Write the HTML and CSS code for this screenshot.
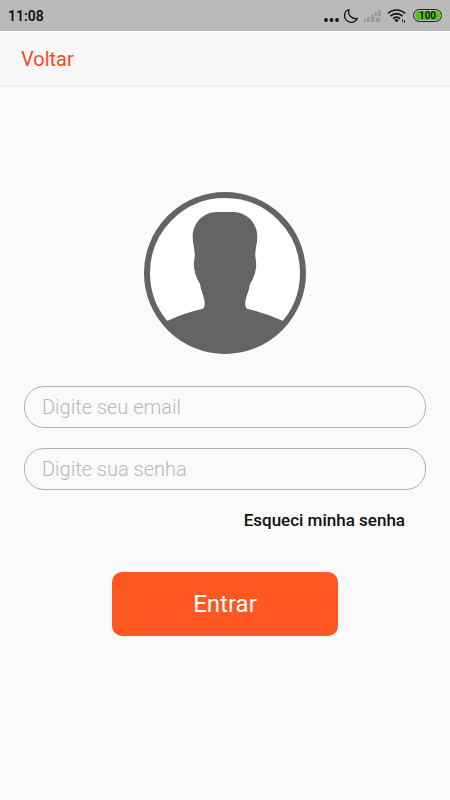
FILE: index.html
```html
<!DOCTYPE html>
<html lang="pt-BR">
    <head>
        <meta charset="utf-8">
        <meta name="viewport" content="width=device-width, initial-scale=1">
        <title>Entrar</title>
        <link rel="stylesheet" href="styles.css">
    </head>
    <body>
        <div class="status">
            <span class="hora">11:08</span>
            <div class="icones">
                <svg width="16" height="16" viewBox="0 0 16 16">
                    <circle cx="3" cy="12" r="1.9"/>
                    <circle cx="8.500" cy="12" r="1.9"/>
                    <circle cx="14" cy="12" r="1.9"/>
                </svg>
                <svg width="16" height="16" viewBox="0 0 16 16">
                    <path d="M6 1.500C3.200 2.400 1.500 4.900 1.500 7.600C1.500 11.400 4.500 14.300 8.200 14.300C11 14.300 13.300 12.700 14.300 10.300C9.200 11.600 4.200 7.300 6 1.500Z" fill="none" stroke="#111" stroke-width="1.300" stroke-linejoin="round"/>
                </svg>
                <svg class="sinal" width="18" height="16" viewBox="0 0 18 16">
                    <path d="M1 11h2v3H1zM4 9h3v5H4zM8 7h3v7H8zM12 4h2v4h-2zM15 2h3v6h-3z"/>
                    <path d="M12.500 9.500l4.500 4.500M17 9.500l-4.500 4.500" fill="none" stroke="#919191" stroke-width="1.500"/>
                </svg>
                <svg class="wifi" width="20" height="16" viewBox="0 0 20 16">
                    <g fill="none" stroke="#111" stroke-width="1.700">
                        <path d="M1 5.500C6 .8 13 .8 18 5.500"/>
                        <path d="M3.500 8.200C7 4.800 12 4.800 15.500 8.200"/>
                        <path d="M6 10.700C8.200 8.600 10.800 8.600 13 10.700"/>
                    </g>
                    <path d="M7.300 12C8.700 10.800 10.300 10.800 11.700 12L9.500 14.300Z"/>
                    <path d="M15.500 11v3M17.500 12v3" stroke="#333" stroke-width="1"/>
                </svg>
                <span class="bateria">100</span>
            </div>
        </div>
        <header class="header">
            <a href="#" class="voltar">Voltar</a>
        </header>
        <main class="wrapper">
            <svg class="avatar" width="162" height="162" viewBox="0 0 162 162" role="img" aria-label="Usuário">
                <circle cx="81" cy="81" r="78" fill="#fff" stroke="#646464" stroke-width="6"/>
                <path d="M81 20H73C59 20 48.700 31 48.700 45C48.700 53 51.500 58 50.500 66C48.500 75 51 84 56 92C57 100 61 105 60.700 113Q60.700 116 58 117Q40 121 23 129L20 131A79 79 0 0 0 142 131L139 129Q122 121 104 117Q101.300 116 101.300 113C101 105 105 100 106 92C111 84 113.500 75 111.500 66C110.500 58 113.300 53 113.300 45C113.300 31 103 20 89 20Z" fill="#646464"/>
            </svg>
            <form class="login">
                <input type="email" class="campo" placeholder="Digite seu email" aria-label="Email">
                <input type="password" class="campo" placeholder="Digite sua senha" aria-label="Senha">
                <a href="#" class="esqueci">Esqueci minha senha</a>
                <button type="button" class="entrar">Entrar</button>
            </form>
        </main>
    </body>
</html>
```
FILE: styles.css
```css
* {
    box-sizing: border-box;
}
body {
    margin: 0;
    background-color: #fafafa;
    font-family: Roboto, sans-serif;
}
.status {
    display: flex;
    justify-content: space-between;
    align-items: center;
    height: 31px;
    padding: 0 8px;
    background-color: #b9b9b9;
    color: #111;
}
.hora {
    font-size: 14px;
    font-weight: 600;
}
.icones {
    display: flex;
    align-items: center;
    gap: 4px;
}
.icones svg {
    fill: #111;
}
.icones .sinal {
    fill: #9b9b9b;
}
.wifi {
    margin: 0 2px;
}
.bateria {
    width: 29px;
    height: 13px;
    border: 1px solid #222;
    border-radius: 7px;
    box-shadow: inset 0 0 0 1px #b9b9b9;
    background-color: #4cc70c;
    font-size: 10px;
    font-weight: 600;
    line-height: 11px;
    text-align: center;
}
.header {
    display: flex;
    align-items: center;
    height: 56px;
    padding: 2px 21px 0;
    background-color: #f8f8f8;
    border-bottom: 2px solid #ececec;
}
.voltar {
    color: #ff4715;
    font-size: 20px;
    text-decoration: none;
}
.wrapper {
    padding: 105px 24px 24px;
}
.avatar {
    display: block;
    margin: 0 auto 32px;
}
.login {
    display: flex;
    flex-direction: column;
}
.campo {
    width: 100%;
    height: 42px;
    margin-bottom: 20px;
    padding: 0 17px;
    border: 1px solid #b0b0b0;
    border-radius: 20px;
    background-color: transparent;
    font-family: inherit;
    font-size: 20px;
    font-weight: 300;
}
.campo::placeholder {
    color: #b9b9b9;
}
.esqueci {
    align-self: flex-end;
    margin-right: 21px;
    color: #111;
    font-size: 17px;
    font-weight: 500;
    line-height: 20px;
    text-decoration: none;
}
.entrar {
    align-self: center;
    width: 56%;
    height: 64px;
    margin-top: 42px;
    border: 0;
    border-radius: 10px;
    background-color: #ff5722;
    color: white;
    font-family: inherit;
    font-size: 24px;
    cursor: pointer;
}
```
